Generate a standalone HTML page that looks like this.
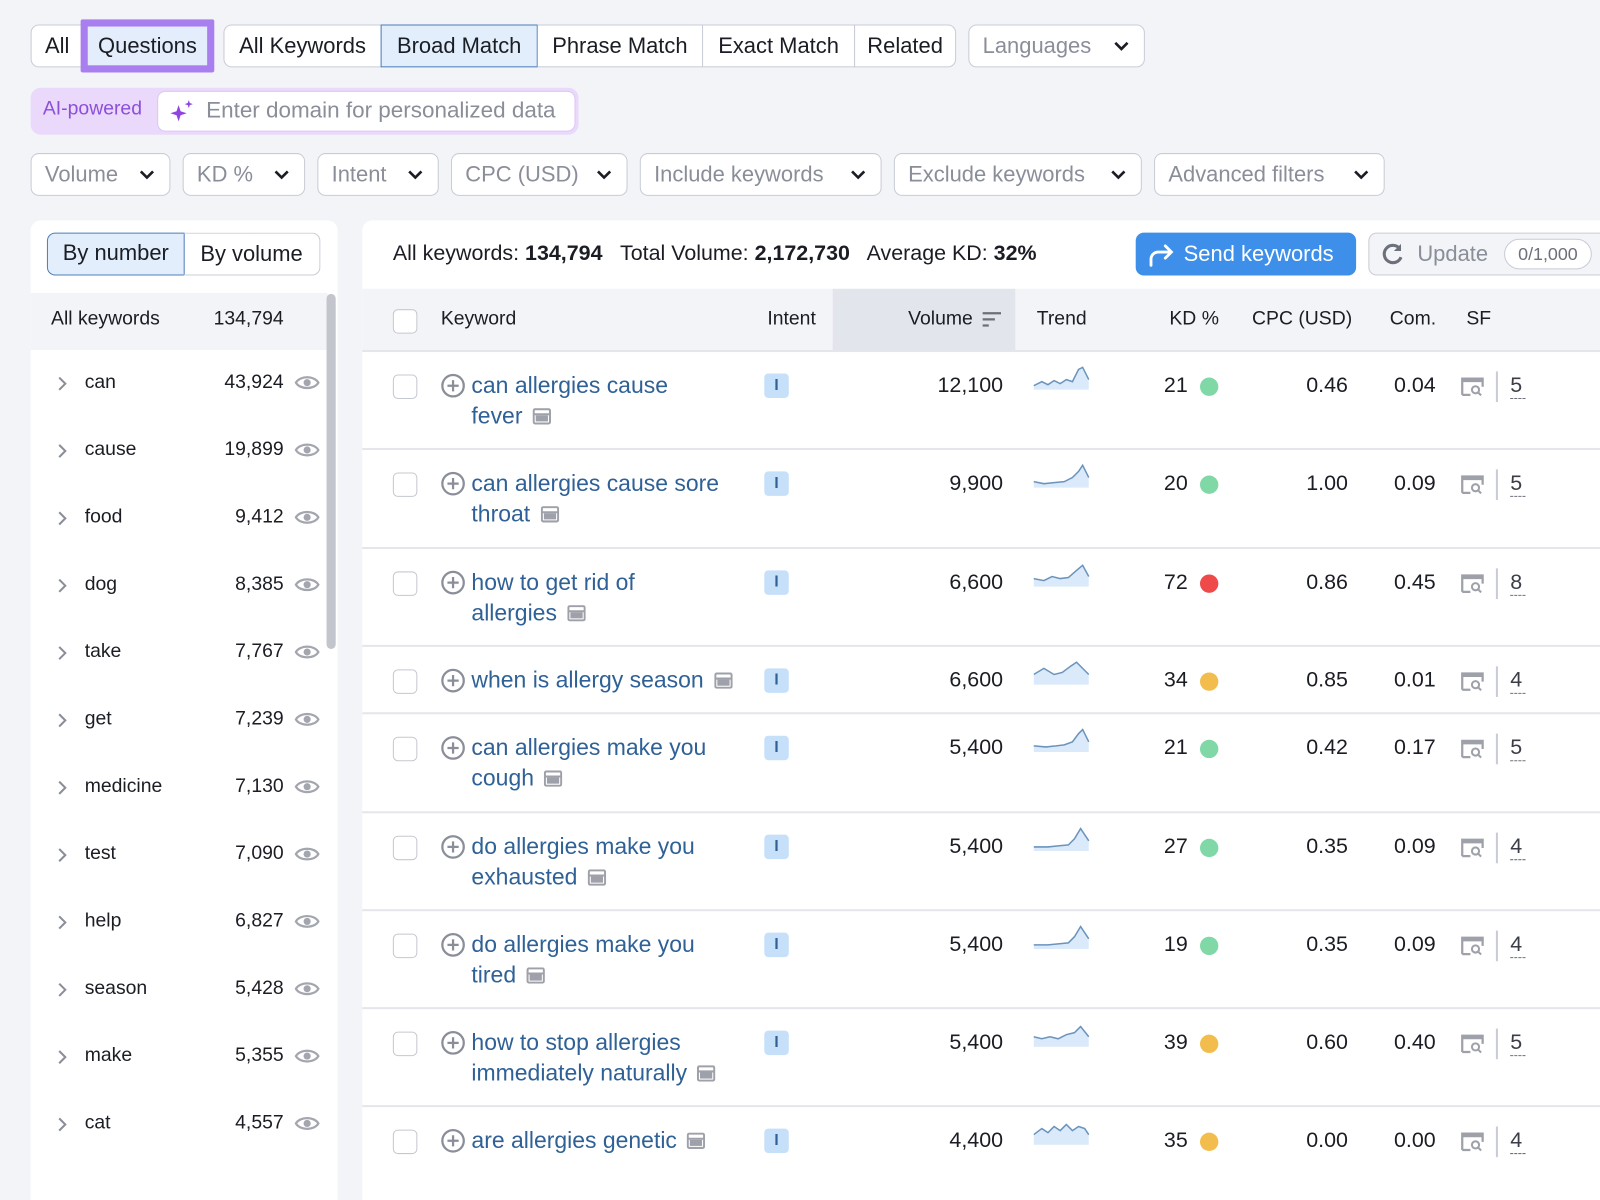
<!DOCTYPE html>
<html><head><meta charset="utf-8"><style>
*{box-sizing:border-box;margin:0;padding:0}
html,body{width:1600px;height:1173px;overflow:hidden;background:#f3f4f8}
#w{position:absolute;left:0;top:0;width:1568px;height:1150px;transform:scale(1.0204);transform-origin:0 0;font-family:"Liberation Sans",sans-serif;color:#1b1d24}
.a{position:absolute;white-space:nowrap}
.btn{position:absolute;height:42px;border:1px solid #c9ccd6;border-radius:8px;background:#fff;font-size:21.5px;line-height:40px;color:#8a8e99;padding-left:13px}
.chev{position:absolute;right:14px;top:13px}
.seg{position:absolute;height:42px;top:24px;border:1px solid #c9ccd6;background:#fff;font-size:21.5px;line-height:40px;text-align:center;color:#1b1d24}
.kw{color:#2f6196;font-size:22.5px;line-height:30px}
.num{font-size:21px;text-align:right}
.hd{font-size:19px;color:#1b1d24}
.cb{position:absolute;width:24px;height:24px;border:1.5px solid #c5c8d0;border-radius:5px;background:#fff}
.dot{position:absolute;width:18px;height:18px;border-radius:50%}
.badge{position:absolute;width:24px;height:24px;border-radius:4px;background:#c6e0fa;color:#2f6196;font-size:15px;font-weight:bold;text-align:center;line-height:24px}
.line{position:absolute;left:355px;width:1245px;height:2px;background:#e4e6ec}
</style></head><body><div id="w">
<div class="seg" style="left:30px;width:52px;border-radius:8px 0 0 8px">All</div>
<div class="a" style="left:79px;top:19px;width:131px;height:52px;background:#a97ff0;border-radius:2px"></div>
<div class="a" style="left:86px;top:26px;width:117px;height:38px;background:#e3edfb;font-size:21.5px;line-height:38px;text-align:center">Questions</div>
<div class="seg" style="left:219px;width:155px;border-radius:8px 0 0 8px">All Keywords</div>
<div class="seg" style="left:373px;width:154px;background:#e2eefb;border-color:#4d7fb8">Broad Match</div>
<div class="seg" style="left:527px;width:162px;border-left:none">Phrase Match</div>
<div class="seg" style="left:688px;width:150px">Exact Match</div>
<div class="seg" style="left:837px;width:100px;border-radius:0 8px 8px 0">Related</div>
<div class="btn" style="left:949px;top:24px;width:173px">Languages<svg class="chev" width="16" height="14" viewBox="0 0 16 14"><path d="M2 4l6 6 6-6" stroke="#1b1d24" stroke-width="2.6" fill="none"/></svg></div>
<div class="a" style="left:30px;top:86px;width:537px;height:46px;background:#ead9fb;border-radius:10px"></div>
<div class="a" style="left:42px;top:96px;font-size:19px;color:#8c4fd9">AI-powered</div>
<div class="a" style="left:154px;top:89px;width:410px;height:40px;background:#fff;border:1px solid #dcc6f5;border-radius:8px"></div>
<svg class="a" style="left:166px;top:96px" width="26" height="26" viewBox="0 0 26 26"><path d="M9 7l2 6 6 2-6 2-2 6-2-6-6-2 6-2z" fill="#8f45e0"/><path d="M19 2l1 3 3 1-3 1-1 3-1-3-3-1 3-1z" fill="#8f45e0"/></svg>
<div class="a" style="left:202px;top:95px;font-size:22px;color:#8a8e99">Enter domain for personalized data</div>
<div class="btn" style="left:30px;top:150px;width:137px">Volume<svg class="chev" width="16" height="14" viewBox="0 0 16 14"><path d="M2 4l6 6 6-6" stroke="#1b1d24" stroke-width="2.6" fill="none"/></svg></div>
<div class="btn" style="left:179px;top:150px;width:120px">KD %<svg class="chev" width="16" height="14" viewBox="0 0 16 14"><path d="M2 4l6 6 6-6" stroke="#1b1d24" stroke-width="2.6" fill="none"/></svg></div>
<div class="btn" style="left:311px;top:150px;width:119px">Intent<svg class="chev" width="16" height="14" viewBox="0 0 16 14"><path d="M2 4l6 6 6-6" stroke="#1b1d24" stroke-width="2.6" fill="none"/></svg></div>
<div class="btn" style="left:442px;top:150px;width:173px">CPC (USD)<svg class="chev" width="16" height="14" viewBox="0 0 16 14"><path d="M2 4l6 6 6-6" stroke="#1b1d24" stroke-width="2.6" fill="none"/></svg></div>
<div class="btn" style="left:627px;top:150px;width:237px">Include keywords<svg class="chev" width="16" height="14" viewBox="0 0 16 14"><path d="M2 4l6 6 6-6" stroke="#1b1d24" stroke-width="2.6" fill="none"/></svg></div>
<div class="btn" style="left:876px;top:150px;width:243px">Exclude keywords<svg class="chev" width="16" height="14" viewBox="0 0 16 14"><path d="M2 4l6 6 6-6" stroke="#1b1d24" stroke-width="2.6" fill="none"/></svg></div>
<div class="btn" style="left:1131px;top:150px;width:226px">Advanced filters<svg class="chev" width="16" height="14" viewBox="0 0 16 14"><path d="M2 4l6 6 6-6" stroke="#1b1d24" stroke-width="2.6" fill="none"/></svg></div>
<div class="a" style="left:30px;top:216px;width:301px;height:960px;background:#fff;border-radius:10px 10px 0 0"></div>
<div class="a" style="left:46px;top:228px;width:135px;height:42px;background:#e2eefb;border:1.5px solid #4d7fb8;border-radius:8px 0 0 8px;font-size:21.5px;line-height:39px;text-align:center">By number</div>
<div class="a" style="left:180px;top:228px;width:134px;height:42px;border:1px solid #c9ccd6;border-left:none;border-radius:0 8px 8px 0;font-size:21.5px;line-height:40px;text-align:center">By volume</div>
<div class="a" style="left:30px;top:287px;width:291px;height:56px;background:#f3f4f8"></div>
<div class="a" style="left:320px;top:288px;width:9px;height:348px;background:#c3c5cc;border-radius:5px"></div>
<div class="a" style="left:50px;top:302px;font-size:19px">All keywords</div>
<div class="a" style="left:178px;width:100px;text-align:right;top:302px;font-size:19px">134,794</div>
<div id="lst"></div>
<div class="a" style="left:355px;top:216px;width:1245px;height:960px;background:#fff;border-radius:10px 0 0 0"></div>
<div class="a" style="left:385px;top:237px;font-size:21px">All keywords: <b>134,794</b> &nbsp; Total Volume: <b>2,172,730</b> &nbsp; Average KD: <b>32%</b></div>
<div class="a" style="left:1113px;top:228px;width:216px;height:42px;background:#3d8fea;border-radius:8px;color:#fff;font-size:21.5px;line-height:42px;padding-left:47px">Send keywords</div>
<svg class="a" style="left:1124px;top:236px" width="28" height="26" viewBox="0 0 28 26"><path d="M4 24v-6a7 7 0 0 1 7-7h13M18 5l6 6-6 6" stroke="#fff" stroke-width="2.8" fill="none" stroke-linecap="round"/></svg>
<div class="a" style="left:1341px;top:228px;width:270px;height:42px;background:#f3f4f8;border:1px solid #c9ccd6;border-radius:8px;color:#8a8e99;font-size:21.5px;line-height:40px;padding-left:47px">Update</div>
<svg class="a" style="left:1353px;top:237px" width="24" height="24" viewBox="0 0 24 24"><path d="M19 7A8.5 8.5 0 1 0 20 15" stroke="#6c707a" stroke-width="3" fill="none"/><path d="M20 2v7h-7" fill="#6c707a"/></svg>
<div class="a" style="left:1474px;top:234px;width:86px;height:30px;border:1px solid #c9ccd6;border-radius:15px;background:#fff;font-size:17.5px;line-height:28px;text-align:center;color:#6c707a">0/1,000</div>
<div class="a" style="left:355px;top:283px;width:1245px;height:61px;background:#f3f4f8"></div>
<div class="a" style="left:816px;top:283px;width:179px;height:61px;background:#e3e5ec"></div>
<div class="line" style="top:343px"></div>
<div class="cb" style="left:385px;top:303px"></div>
<div class="a hd" style="left:432px;top:302px">Keyword</div>
<div class="a hd" style="left:752px;top:302px">Intent</div>
<div class="a hd" style="left:890px;top:302px">Volume</div>
<svg class="a" style="left:962px;top:305px" width="20" height="16"><path d="M1 2h18M1 8h12M1 14h6" stroke="#6c707a" stroke-width="2.2"/></svg>
<div class="a hd" style="left:1016px;top:302px">Trend</div>
<div class="a hd" style="left:1146px;top:302px">KD %</div>
<div class="a hd" style="left:1227px;top:302px">CPC (USD)</div>
<div class="a hd" style="left:1362px;top:302px">Com.</div>
<div class="a hd" style="left:1437px;top:302px">SF</div>
<div id="rows"></div>
</div>
<script>
var L=[["can","43,924"],["cause","19,899"],["food","9,412"],["dog","8,385"],["take","7,767"],["get","7,239"],["medicine","7,130"],["test","7,090"],["help","6,827"],["season","5,428"],["make","5,355"],["cat","4,557"]];
var h="";
L.forEach(function(r,i){var y=364+66*i;
h+='<svg class="a" style="left:55px;top:'+(y+4)+'px" width="12" height="16"><path d="M3 2l6 6-6 6" stroke="#8a8e99" stroke-width="2" fill="none"/></svg>';
h+='<div class="a" style="left:83px;top:'+y+'px;font-size:19px">'+r[0]+'</div>';
h+='<div class="a" style="left:178px;width:100px;text-align:right;top:'+y+'px;font-size:19px">'+r[1]+'</div>';
h+='<svg class="a" style="left:288px;top:'+(y+1)+'px" width="26" height="20" viewBox="0 0 26 20"><path d="M2 10C6 3 20 3 24 10C20 17 6 17 2 10z" stroke="#a3a6ae" stroke-width="2.2" fill="none"/><circle cx="13" cy="10" r="3.5" fill="#a3a6ae"/></svg>';});
document.getElementById("lst").innerHTML=h;
var G="#7fd8a6",R="#ef4a4a",Y="#f2bd4c";
var D=[[344,96,"can allergies cause","fever","12,100","21",G,"0.46","0.04","5","M0 20L8 16 14 19 20 15 26 18 32 14 38 16 44 4 48 2 54 14"],
[440,97,"can allergies cause sore","throat","9,900","20",G,"1.00","0.09","5","M0 18L10 20 20 19 30 18 38 14 44 8 48 2 54 14"],
[537,96,"how to get rid of","allergies","6,600","72",R,"0.86","0.45","8","M0 16L10 18 18 14 26 16 34 15 42 8 48 3 54 14"],
[633,66,"when is allergy season","","6,600","34",Y,"0.85","0.01","4","M0 14L10 8 20 14 28 12 36 6 42 2 48 8 54 14"],
[699,97,"can allergies make you","cough","5,400","21",G,"0.42","0.17","5","M0 18L12 19 22 18 30 17 38 14 44 6 48 2 54 14"],
[796,96,"do allergies make you","exhausted","5,400","27",G,"0.35","0.09","4","M0 20L14 20 24 19 34 18 40 12 46 2 54 14"],
[892,96,"do allergies make you","tired","5,400","19",G,"0.35","0.09","4","M0 20L14 20 24 19 34 18 40 12 46 2 54 14"],
[988,96,"how to stop allergies","immediately naturally","5,400","39",Y,"0.60","0.40","5","M0 14L8 16 16 14 24 16 32 12 40 10 46 4 54 14"],
[1084,90,"are allergies genetic","","4,400","35",Y,"0.00","0.00","4","M0 14L8 8 14 12 20 6 26 10 32 4 38 10 44 6 50 8 54 14"]];
var s="",IC='<rect x="1" y="1" width="16" height="14" rx="1.5" stroke="#9ea1a9" stroke-width="2" fill="none"/><path d="M1 6h16" stroke="#9ea1a9" stroke-width="2"/><rect x="3" y="7" width="12" height="6" fill="#9ea1a9"/>';
D.forEach(function(r){var t=r[0],y=t+22;
if(r[0]>344)s+='<div class="line" style="top:'+(t-1)+'px"></div>';
s+='<div class="cb" style="left:385px;top:'+(t+23)+'px"></div>';
s+='<svg class="a" style="left:431px;top:'+(t+21)+'px" width="26" height="26" viewBox="0 0 26 26"><circle cx="13" cy="13" r="10.5" stroke="#8a8e99" stroke-width="2.2" fill="none"/><path d="M13 7.5v11M7.5 13h11" stroke="#8a8e99" stroke-width="2.2"/></svg>';
var l1=r[2],l2=r[3],ic='<svg width="18" height="16" style="vertical-align:-1px;margin-left:10px">'+IC+'</svg>';
if(l2)s+='<div class="a kw" style="left:462px;top:'+(t+19)+'px">'+l1+'<br>'+l2+ic+'</div>';
else s+='<div class="a kw" style="left:462px;top:'+(t+19)+'px">'+l1+ic+'</div>';
s+='<div class="badge" style="left:749px;top:'+(t+22)+'px">I</div>';
s+='<div class="a num" style="left:883px;width:100px;top:'+y+'px">'+r[4]+'</div>';
s+='<svg class="a" style="left:1013px;top:'+(t+14)+'px" width="56" height="24" viewBox="0 0 56 24"><path d="'+r[10]+'L54 24L0 24z" fill="#dbeafa"/><path d="'+r[10]+'" stroke="#6b94bd" stroke-width="1.5" fill="none"/></svg>';
s+='<div class="a num" style="left:1100px;width:64px;top:'+y+'px">'+r[5]+'</div>';
s+='<div class="dot" style="left:1176px;top:'+(t+26)+'px;background:'+r[6]+'"></div>';
s+='<div class="a num" style="left:1221px;width:100px;top:'+y+'px">'+r[7]+'</div>';
s+='<div class="a num" style="left:1307px;width:100px;top:'+y+'px">'+r[8]+'</div>';
s+='<svg class="a" style="left:1431px;top:'+(t+25)+'px" width="24" height="20" viewBox="0 0 24 20"><path d="M2 18V2h20v8M2 18h8" stroke="#9ea1a9" stroke-width="2.2" fill="none"/><path d="M2 4h20" stroke="#9ea1a9" stroke-width="3"/><circle cx="15" cy="13" r="3.5" stroke="#9ea1a9" stroke-width="2" fill="none"/><path d="M17.5 15.5l3 3" stroke="#9ea1a9" stroke-width="2"/></svg>';
s+='<div class="a" style="left:1466px;top:'+(t+20)+'px;width:1.5px;height:30px;background:#c9ccd6"></div>';
s+='<div class="a" style="left:1480px;top:'+y+'px;font-size:21px;color:#3b3e47">'+r[9]+'</div>';
s+='<div class="a" style="left:1480px;top:'+(t+46)+'px;width:15px;border-top:1.5px dashed #6c707a"></div>';});
document.getElementById("rows").innerHTML=s;
</script>
</body></html>
